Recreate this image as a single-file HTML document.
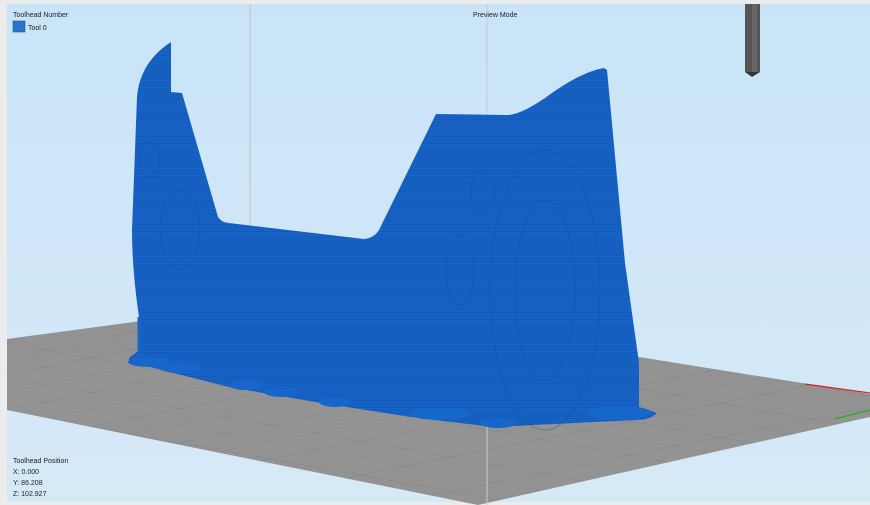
<!DOCTYPE html>
<html><head><style>
html,body{margin:0;padding:0;width:870px;height:505px;overflow:hidden;background:#ececec}
svg{position:absolute;left:0;top:0}
.t{font-family:"Liberation Sans",sans-serif;font-size:7px;fill:#222}
</style></head><body>
<svg width="870" height="505" viewBox="0 0 870 505">
<defs>
<linearGradient id="bg" x1="0" y1="0" x2="0" y2="1">
<stop offset="0" stop-color="#c9e4f8"/><stop offset="1" stop-color="#d6e9f7"/>
</linearGradient>
<pattern id="grid" width="90" height="90" patternUnits="userSpaceOnUse" patternTransform="matrix(1,0.18,1,-0.2,0,0)">
<rect width="90" height="90" fill="#939393"/>
<path d="M0 45H90M45 0V90" stroke="#808080" stroke-width="0.6"/>
<path d="M0 0H90M0 0V90" stroke="#666" stroke-width="0.8"/>
</pattern>
<pattern id="str" width="4" height="2.2" patternUnits="userSpaceOnUse">
<rect width="4" height="2.2" fill="#1a66cc"/>
<rect width="4" height="0.8" fill="#0f55b0"/>
</pattern>
</defs>
<rect x="7" y="4" width="863" height="498" fill="url(#bg)"/>
<polygon points="7,339 290,301 870,394 870,417 478,505 7,410" fill="url(#grid)"/>
<line x1="250" y1="4" x2="250" y2="230" stroke="#b9c2c9" stroke-width="1"/>
<line x1="487" y1="4" x2="487" y2="505" stroke="#c4ccd2" stroke-width="1"/>
<path d="M171,42 L171,92 L182,93 L218,217 Q222,223 229,223 L364,239 Q374,238 379,230 L436,114 L507,115 Q520,115 545,98 Q580,72 604,68 L607,70 L625,263 L639,363 L639,407 L657,413 Q650,420 636,420 L493,427 L411,417 L321,403 L229,387 L150,367 L129,362 L129,358 L139,350 L139,317 Q132,270 132,230 L137,97 Q140,62 171,42 Z" fill="url(#str)"/>
<path d="M139,317 L139,355" stroke="#1a64c9" stroke-width="3"/>
<g fill="#1766cc">
<ellipse cx="150" cy="362" rx="22" ry="5"/>
<ellipse cx="180" cy="368" rx="20" ry="5"/>
<ellipse cx="245" cy="385" rx="16" ry="5"/>
<ellipse cx="282" cy="392" rx="18" ry="5"/>
<ellipse cx="335" cy="402" rx="16" ry="5"/>
<ellipse cx="440" cy="414" rx="30" ry="6"/>
<ellipse cx="498" cy="423" rx="18" ry="5"/>
<ellipse cx="620" cy="413" rx="32" ry="7"/>
</g>
<g fill="none" stroke="#0d4d9e" stroke-width="1" opacity="0.4">
<ellipse cx="180" cy="230" rx="20" ry="40"/>
<ellipse cx="483" cy="190" rx="12" ry="20"/>
<ellipse cx="460" cy="270" rx="14" ry="35"/>
<ellipse cx="150" cy="160" rx="10" ry="18"/>
<ellipse cx="545" cy="290" rx="30" ry="90"/>
<ellipse cx="545" cy="290" rx="55" ry="140"/>
</g>
<rect x="745" y="4" width="15" height="68" fill="#555"/>
<rect x="752" y="4" width="5" height="68" fill="#666"/>
<polygon points="745,72 760,72 752,77" fill="#333"/>
<line x1="805" y1="384" x2="870" y2="393" stroke="#e02020" stroke-width="1.2"/>
<line x1="835" y1="419" x2="870" y2="410" stroke="#20b020" stroke-width="1.2"/>
<text class="t" x="13" y="17">Toolhead Number</text>
<rect x="13" y="21" width="12" height="11" fill="#2a75c8" stroke="#1a5a9f" stroke-width="0.6"/>
<text class="t" x="28" y="30">Tool 0</text>
<text class="t" x="473" y="17">Preview Mode</text>
<text class="t" x="13" y="463">Toolhead Position</text>
<text class="t" x="13" y="474">X: 0.000</text>
<text class="t" x="13" y="485">Y: 86.208</text>
<text class="t" x="13" y="496">Z: 102.927</text>
</svg>
</body></html>
